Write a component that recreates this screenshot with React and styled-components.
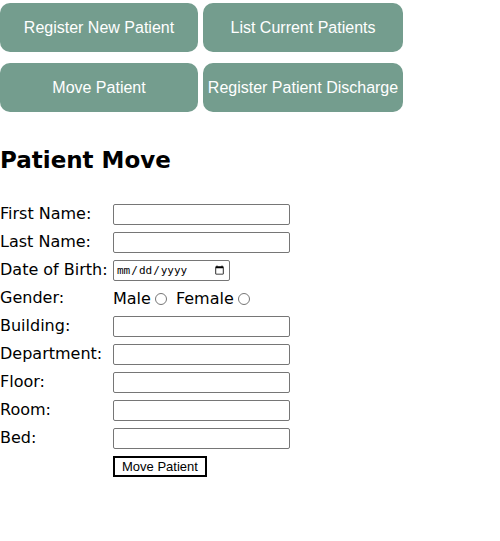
import React from 'react';
import styled, { createGlobalStyle } from 'styled-components';

const GlobalStyle = createGlobalStyle`
  body {
    margin: 0;
    background: #ffffff;
    font-family: "DejaVu Sans", Verdana, sans-serif;
    color: #000000;
  }
`;

const Nav = styled.nav`
  display: grid;
  grid-template-columns: 198px 200px;
  column-gap: 5px;
  row-gap: 11px;
  padding-top: 3px;
`;

const NavButton = styled.button`
  height: 49px;
  border: none;
  border-radius: 10px;
  background: #749d8e;
  color: #ffffff;
  font-family: "Liberation Sans", Arial, sans-serif;
  font-size: 16px;
  padding: 0;
  white-space: nowrap;
  cursor: pointer;
`;

const Title = styled.h2`
  font-size: 23px;
  font-weight: bold;
  margin: 35px 0 31px;
`;

const Form = styled.form`
  display: grid;
  grid-template-columns: 113px auto;
  grid-auto-rows: 28px;
  align-items: start;
  font-size: 16px;
`;

const Label = styled.label`
  line-height: 20px;
  white-space: nowrap;
`;

const Field = styled.div`
  display: flex;
  align-items: center;
  height: 21px;
`;

const TextInput = styled.input`
  box-sizing: border-box;
  width: 177px;
  height: 21px;
  border: 1px solid #767676;
  border-radius: 2px;
  padding: 1px 2px;
  font-size: 13px;
`;

const DateInput = styled.input`
  box-sizing: border-box;
  width: 117px;
  height: 21px;
  border: 1px solid #767676;
  border-radius: 2px;
  padding: 1px 2px;
  font-family: "DejaVu Sans Mono", monospace;
  font-size: 11px;
`;

const RadioGroup = styled.div`
  display: flex;
  align-items: center;
  line-height: 20px;
`;

const Radio = styled.input`
  margin: 0 9px 0 4px;
  width: 12px;
  height: 12px;
`;

const Submit = styled.button`
  box-sizing: border-box;
  height: 21px;
  padding: 0 7px;
  background: #ffffff;
  border: 2px solid #000000;
  font-family: "Liberation Sans", Arial, sans-serif;
  font-size: 13px;
  color: #000000;
`;

const fields = [
  { id: 'firstName', label: 'First Name:' },
  { id: 'lastName', label: 'Last Name:' },
  { id: 'dob', label: 'Date of Birth:', type: 'date' },
  { id: 'gender', label: 'Gender:', type: 'radio' },
  { id: 'building', label: 'Building:' },
  { id: 'department', label: 'Department:' },
  { id: 'floor', label: 'Floor:' },
  { id: 'room', label: 'Room:' },
  { id: 'bed', label: 'Bed:' },
];

const navItems = [
  'Register New Patient',
  'List Current Patients',
  'Move Patient',
  'Register Patient Discharge',
];

const App = () => {
  const renderField = (f) => {
    if (f.type === 'date') return <DateInput type="date" id={f.id} />;
    if (f.type === 'radio')
      return (
        <RadioGroup>
          Male
          <Radio type="radio" name="gender" value="male" />
          Female
          <Radio type="radio" name="gender" value="female" />
        </RadioGroup>
      );
    return <TextInput type="text" id={f.id} />;
  };

  return (
    <>
      <GlobalStyle />
      <Nav>
        {navItems.map((item) => (
          <NavButton key={item} type="button">
            {item}
          </NavButton>
        ))}
      </Nav>
      <Title>Patient Move</Title>
      <Form onSubmit={(e) => e.preventDefault()}>
        {fields.map((f) => (
          <React.Fragment key={f.id}>
            <Label htmlFor={f.id}>{f.label}</Label>
            <Field>{renderField(f)}</Field>
          </React.Fragment>
        ))}
        <span />
        <Field>
          <Submit type="submit">Move Patient</Submit>
        </Field>
      </Form>
    </>
  );
};

export default App;
